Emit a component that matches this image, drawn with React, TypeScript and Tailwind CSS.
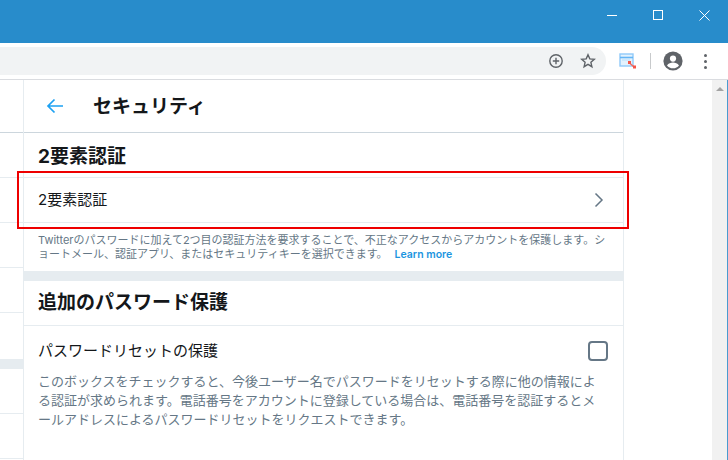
import React from "react";

export default function App() {
  return (
    <div className="relative flex h-[460px] w-[728px] flex-col overflow-hidden bg-white font-['Inter','Noto_Sans_CJK_JP',sans-serif]">
      {/* title bar */}
      <div className="flex h-[43px] shrink-0 items-start justify-end bg-[#288ccb] pr-px">
        <div className="flex h-[30px] w-[46px] items-center justify-center">
          <div className="h-px w-[10px] bg-white" />
        </div>
        <div className="flex h-[30px] w-[46px] items-center justify-center">
          <div className="h-[10px] w-[10px] border border-white" />
        </div>
        <div className="flex h-[30px] w-[46px] items-center justify-center">
          <svg width="11" height="11" viewBox="0 0 11 11" stroke="white" strokeWidth="1" fill="none"><path d="M0.5 0.5l10 10M10.500 0.5l-10 10" /></svg>
        </div>
      </div>
      {/* toolbar */}
      <div className="flex h-[37px] shrink-0 items-center border-b border-[#dadce0] bg-white">
        <div className="flex h-[28px] w-[606px] items-center justify-end gap-[16px] rounded-r-full bg-[#f1f3f4] pr-[10px]">
          <svg width="16" height="16" viewBox="0 0 16 16" fill="none" stroke="#5f6368" strokeWidth="1.4"><circle cx="8" cy="8" r="6.2" /><path d="M8 4.800v6.400M4.800 8h6.400" /></svg>
          <svg width="16" height="16" viewBox="0 0 16 16" fill="none" stroke="#5f6368" strokeWidth="1.4"><path d="M8 1.800l1.800 4.100 4.500.4-3.400 3 1 4.400L8 11.400l-3.900 2.300 1-4.400-3.400-3 4.500-.4z" /></svg>
        </div>
        <div className="ml-[13px] flex items-center">
          <svg width="17" height="16" viewBox="0 0 17 16">
            <rect x="1" y="1" width="13" height="12" fill="#e3f2fd" stroke="#90caf9" strokeWidth="1.4" />
            <path d="M1 4.500h13" stroke="#64b5f6" strokeWidth="1.600" />
            <path d="M3 7h8" stroke="#bbdefb" strokeWidth="1" />
            <path d="M10 9.500l5 4.500" stroke="#f06a5e" strokeWidth="1.400" />
            <rect x="9" y="8" width="3" height="3" fill="#f4574a" />
            <rect x="14" y="12.500" width="3" height="3" fill="#f4574a" />
          </svg>
        </div>
        <div className="ml-[14px] h-[16px] w-px bg-[#c8cacc]" />
        <div className="ml-[12px]">
          <svg width="20" height="20" viewBox="0 0 20 20">
            <circle cx="10" cy="10" r="9.600" fill="#5f6368" />
            <circle cx="10" cy="7.600" r="3.100" fill="white" />
            <path d="M4 14.400c1.400-2 3.800-2.900 6-2.900s4.600.9 6 2.900c-1.400 1.800-3.600 2.900-6 2.900s-4.600-1.100-6-2.900z" fill="white" />
          </svg>
        </div>
        <div className="ml-[21px] flex flex-col gap-[3px]">
          <div className="h-[3px] w-[3px] rounded-full bg-[#5f6368]" />
          <div className="h-[3px] w-[3px] rounded-full bg-[#5f6368]" />
          <div className="h-[3px] w-[3px] rounded-full bg-[#5f6368]" />
        </div>
      </div>

      {/* page */}
      <div className="flex min-h-0 flex-1">
        {/* left rail */}
        <div className="w-[24px] shrink-0 border-r border-[#e6ecf0]">
          <div className="h-[53px] border-b border-[#ccd6dd]" />
          <div className="h-[45px] border-b border-[#e6ecf0]" />
          <div className="h-[45px] border-b border-[#e6ecf0]" />
          <div className="h-[45px] border-b border-[#e6ecf0]" />
          <div className="h-[45px] border-b border-[#e6ecf0]" />
          <div className="h-[46px]" />
          <div className="h-[10px] bg-[#e6ecf0]" />
          <div className="h-[45px] border-b border-[#e6ecf0]" />
          <div className="h-[45px] border-b border-[#e6ecf0]" />
        </div>

        {/* main */}
        <div className="w-[600px] shrink-0 border-r border-[#e6ecf0]">
          <div className="flex h-[53px] items-center border-b border-[#ccd6dd] pl-[22px]">
            <svg width="18" height="18" viewBox="0 0 18 18" fill="none" stroke="#1da1f2" strokeWidth="1.7">
              <path d="M17 9H2M8.500 2.500L2 9l6.500 6.500" />
            </svg>
            <div className="ml-[29px] pt-[2px] text-[19px] font-bold leading-[26px] text-[#14171a]">セキュリティ</div>
          </div>
          <div className="flex h-[44px] items-center px-[14px] pt-[3px]">
            <div className="text-[19px] font-bold leading-[24px] text-[#14171a]">2要素認証</div>
          </div>
          <div className="flex h-[46px] items-center justify-between border-y border-[#e6ecf0] pl-[14px] pr-[16px]">
            <div className="text-[15px] leading-[20px] text-[#14171a]">2要素認証</div>
            <svg width="16" height="16" viewBox="0 0 16 16" fill="none" stroke="#657786" strokeWidth="1.500"><path d="M4.500 1.500L11 8l-6.500 6.500" /></svg>
          </div>
          <div className="h-[48px] pl-[14px] pr-[15px] pt-[10px] text-[11px] leading-[14px] text-[#657786]">
            Twitterのパスワードに加えて2つ目の認証方法を要求することで、不正なアクセスからアカウントを保護します。ショートメール、認証アプリ、またはセキュリティキーを選択できます。
            <span className="ml-[7px] text-[10.5px] font-semibold text-[#1b95e0]">Learn more</span>
          </div>
          <div className="h-[10px] bg-[#e6ecf0]" />
          <div className="flex h-[45px] items-center border-b border-[#e6ecf0] px-[14px]">
            <div className="text-[19px] font-bold leading-[24px] text-[#14171a]">追加のパスワード保護</div>
          </div>
          <div className="flex h-[46px] items-center justify-between pl-[14px] pr-[15px] pt-[4px]">
            <div className="text-[15px] leading-[20px] text-[#14171a]">パスワードリセットの保護</div>
            <div className="h-[20px] w-[20px] rounded-[4px] border-2 border-[#657786]" />
          </div>
          <div className="pl-[14px] pr-[24px] text-[13px] leading-[19px] text-[#657786]">
            このボックスをチェックすると、今後ユーザー名でパスワードをリセットする際に他の情報による認証が求められます。電話番号をアカウントに登録している場合は、電話番号を認証するとメールアドレスによるパスワードリセットをリクエストできます。
          </div>
        </div>

        <div className="flex-1" />

        {/* scrollbar */}
        <div className="flex w-[16px] shrink-0 justify-center border-r border-[#4a9bd0] bg-[#f1f1f1] pt-[7px]">
          <div className="h-0 w-0 border-x-[4px] border-b-[4px] border-x-transparent border-b-[#a3a3a3]" />
        </div>
      </div>

      {/* annotation */}
      <div className="absolute left-[17px] top-[171px] h-[58px] w-[612px] border-2 border-[#ee0000]" />
    </div>
  );
}
